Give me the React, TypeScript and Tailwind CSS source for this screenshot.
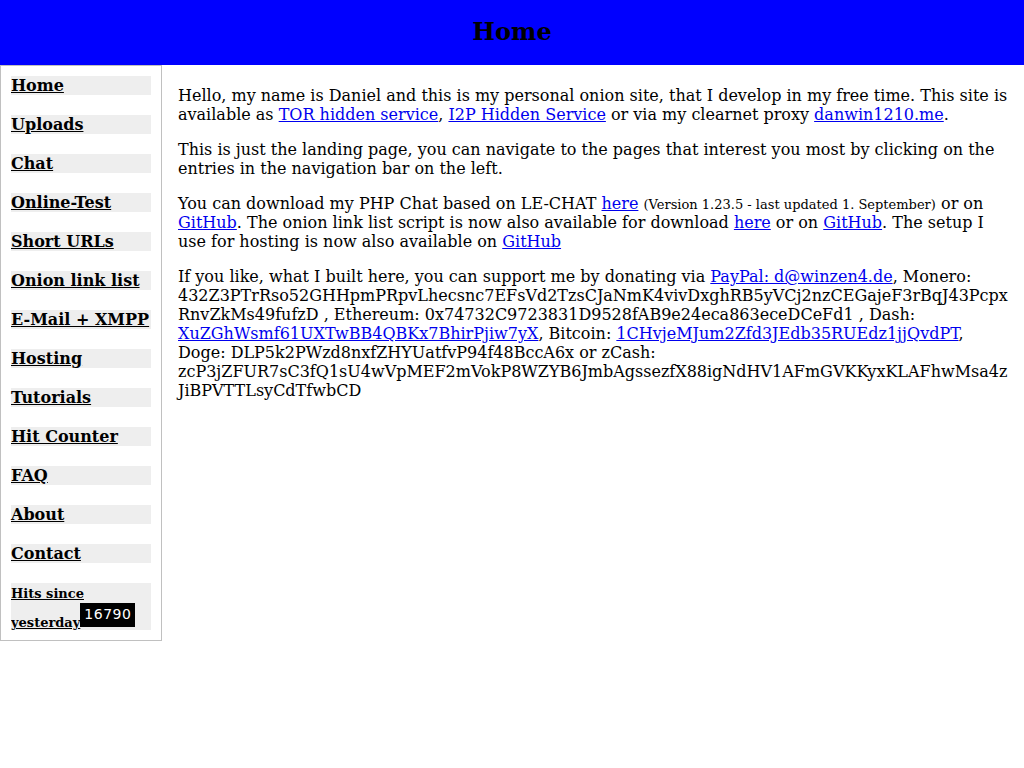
import React from "react";

const navItems = [
  "Home",
  "Uploads",
  "Chat",
  "Online-Test",
  "Short URLs",
  "Onion link list",
  "E-Mail + XMPP",
  "Hosting",
  "Tutorials",
  "Hit Counter",
  "FAQ",
  "About",
  "Contact",
];

function L({ children }: { children: React.ReactNode }) {
  return (
    <a href="#" className="text-[#0000ee] underline">
      {children}
    </a>
  );
}

export default function App() {
  return (
    <div className="min-h-[768px] bg-white text-black font-['DejaVu_Serif',serif] text-[16px] leading-[normal]">
      <header className="h-[65px] bg-[#0000ff] flex items-center justify-center">
        <h1 className="text-[24px] font-bold leading-[normal] pb-[2px]">Home</h1>
      </header>
      <div className="flex items-start">
        <nav className="w-[162px] shrink-0 border border-[#c0c0c0] p-[10px] flex flex-col gap-[20px]">
          {navItems.map((n) => (
            <a key={n} href="#" className="block bg-[#eeeeee] font-bold underline text-black leading-[19px] h-[19px] whitespace-nowrap">
              {n}
            </a>
          ))}
          <div className="bg-[#eeeeee] font-bold leading-[19px] h-[47px] overflow-hidden">
            <a href="#" className="underline text-black text-[13px]">Hits since yesterday</a>
            <span className="inline-block overflow-hidden w-[55px] h-[24px] bg-black text-white text-center font-['DejaVu_Sans',sans-serif] font-normal text-[14px] leading-[22px] tracking-[0.5px]">
              16790
            </span>
          </div>
        </nav>
        <main className="flex-1 min-w-0 pl-[16px] pr-[12px] pt-[21px] [overflow-wrap:break-word]">
          <p className="mb-4">
            Hello, my name is Daniel and this is my personal onion site, that I develop in my free time. This site is available as{" "}
            <L>TOR hidden service</L>, <L>I2P Hidden Service</L> or via my clearnet proxy <L>danwin1210.me</L>.
          </p>
          <p className="mb-4">
            This is just the landing page, you can navigate to the pages that interest you most by clicking on the entries in the navigation bar on the left.
          </p>
          <p className="mb-4">
            You can download my PHP Chat based on LE-CHAT <L>here</L>{" "}
            <small className="text-[13px]">(Version 1.23.5 - last updated 1. September)</small> or on <L>GitHub</L>. The onion link list script is now also available for download <L>here</L> or on <L>GitHub</L>. The setup I use for hosting is now also available on <L>GitHub</L>
          </p>
          <p className="mb-4">
            If you like, what I built here, you can support me by donating via <L>PayPal: d@winzen4.de</L>, Monero:
            432Z3PTrRso52GHHpmPRpvLhecsnc7EFsVd2TzsCJaNmK4vivDxghRB5yVCj2nzCEGajeF3rBqJ43PcpxRnvZkMs49fufzD , Ethereum: 0x74732C9723831D9528fAB9e24eca863eceDCeFd1 , Dash:{" "}
            <L>XuZGhWsmf61UXTwBB4QBKx7BhirPjiw7yX</L>, Bitcoin: <L>1CHvjeMJum2Zfd3JEdb35RUEdz1jjQvdPT</L>, Doge: DLP5k2PWzd8nxfZHYUatfvP94f48BccA6x or zCash:
            zcP3jZFUR7sC3fQ1sU4wVpMEF2mVokP8WZYB6JmbAgssezfX88igNdHV1AFmGVKKyxKLAFhwMsa4zJiBPVTTLsyCdTfwbCD
          </p>
        </main>
      </div>
    </div>
  );
}
